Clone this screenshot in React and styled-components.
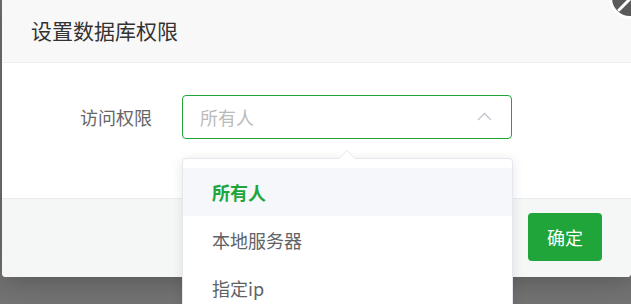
import React from "react";
import styled, { createGlobalStyle } from "styled-components";

const GlobalStyle = createGlobalStyle`
  html, body { margin: 0; padding: 0; overflow: hidden; background: #737373; }
  body { font-family: "Noto Sans CJK SC", "Noto Sans", sans-serif; }
  * { box-sizing: border-box; }
`;

const Page = styled.div`
  position: relative;
  width: 631px;
  height: 304px;
  overflow: hidden;
  background: #737373;
  padding-left: 2px;
`;

const Dialog = styled.div`
  width: 629px;
  background: #fff;
  border-radius: 0 0 4px 4px;
  overflow: hidden;
  box-shadow: 1px 1px 30px rgba(0, 0, 0, 0.3);
`;

const Header = styled.div`
  height: 63px;
  display: flex;
  align-items: center;
  padding-left: 29px;
  padding-bottom: 2px;
  background: #f8f8f8;
  border-bottom: 1px solid #eeeeee;
  font-size: 21px;
  color: #333;
`;

const Body = styled.div`
  height: 135px;
  padding-top: 32px;
  background: #fff;
`;

const FormRow = styled.div`
  display: flex;
  align-items: center;
`;

const Label = styled.div`
  width: 150px;
  text-align: right;
  font-size: 18px;
  color: #666;
  margin-right: 30px;
`;

const Select = styled.div`
  width: 330px;
  height: 44px;
  border: 1px solid #20a53a;
  border-radius: 4px;
  display: flex;
  align-items: center;
  justify-content: space-between;
  padding: 0 19px 0 17px;
  font-size: 18px;
  color: #bbbbbb;
`;

const Chevron = styled.svg`
  width: 15px;
  height: 9px;
  margin-top: -2px;
`;

const Footer = styled.div`
  height: 79px;
  background: #f5f6f6;
  border-top: 1px solid #e9ecec;
  display: flex;
  justify-content: flex-end;
  align-items: center;
  padding-right: 29px;
  padding-bottom: 2px;
`;

const Button = styled.button`
  width: 74px;
  height: 48px;
  border: none;
  border-radius: 4px;
  background: #20a53a;
  color: #fff;
  font-family: inherit;
  font-size: 18px;
  padding: 0;
`;

const Close = styled.div`
  position: absolute;
  left: 609px;
  top: -23px;
  width: 42px;
  height: 42px;
  border-radius: 50%;
  border: 3px solid #fff;
  background: #5a5a5a;
  overflow: hidden;
`;

const Popper = styled.div`
  position: absolute;
  left: 182px;
  top: 158px;
  width: 331px;
  background: #fff;
  border: 1px solid #e4e7ed;
  border-radius: 4px;
  box-shadow: 0 2px 12px rgba(0, 0, 0, 0.1);
  padding: 9px 0;
`;

const Arrow = styled.div`
  position: absolute;
  top: -9px;
  left: 155px;
  width: 0;
  height: 0;
  border-left: 9px solid transparent;
  border-right: 9px solid transparent;
  border-bottom: 9px solid #e4e7ed;
  &::after {
    content: "";
    position: absolute;
    left: -8px;
    top: 1px;
    border-left: 8px solid transparent;
    border-right: 8px solid transparent;
    border-bottom: 8px solid #fff;
  }
`;

const Item = styled.div`
  height: 48px;
  line-height: 48px;
  padding: 0 29px;
  font-size: 18px;
  color: ${(p) => (p.$selected ? "#20a53a" : "#606266")};
  font-weight: ${(p) => (p.$selected ? 700 : 400)};
  background: ${(p) => (p.$hover ? "#f5f7fa" : "#fff")};
`;

export default function App() {
  const options = ["所有人", "本地服务器", "指定ip"];
  return (
    <>
      <GlobalStyle />
      <Page>
        <Dialog>
          <Header>设置数据库权限</Header>
          <Body>
            <FormRow>
              <Label>访问权限</Label>
              <Select>
                <span>所有人</span>
                <Chevron viewBox="0 0 15 9">
                  <path d="M1 8 L7.5 1.5 L14 8" fill="none" stroke="#c0c4cc" strokeWidth="1.3" />
                </Chevron>
              </Select>
            </FormRow>
          </Body>
          <Footer>
            <Button>确定</Button>
          </Footer>
        </Dialog>
        <Close>
          <svg width="36" height="36" viewBox="0 0 36 36">
            <path d="M7 30 L30 7" stroke="#fff" strokeWidth="3" strokeLinecap="round" />
          </svg>
        </Close>
        <Popper>
          <Arrow />
          {options.map((o, i) => (
            <Item key={o} $selected={i === 0} $hover={i === 0}>
              {o}
            </Item>
          ))}
        </Popper>
      </Page>
    </>
  );
}
